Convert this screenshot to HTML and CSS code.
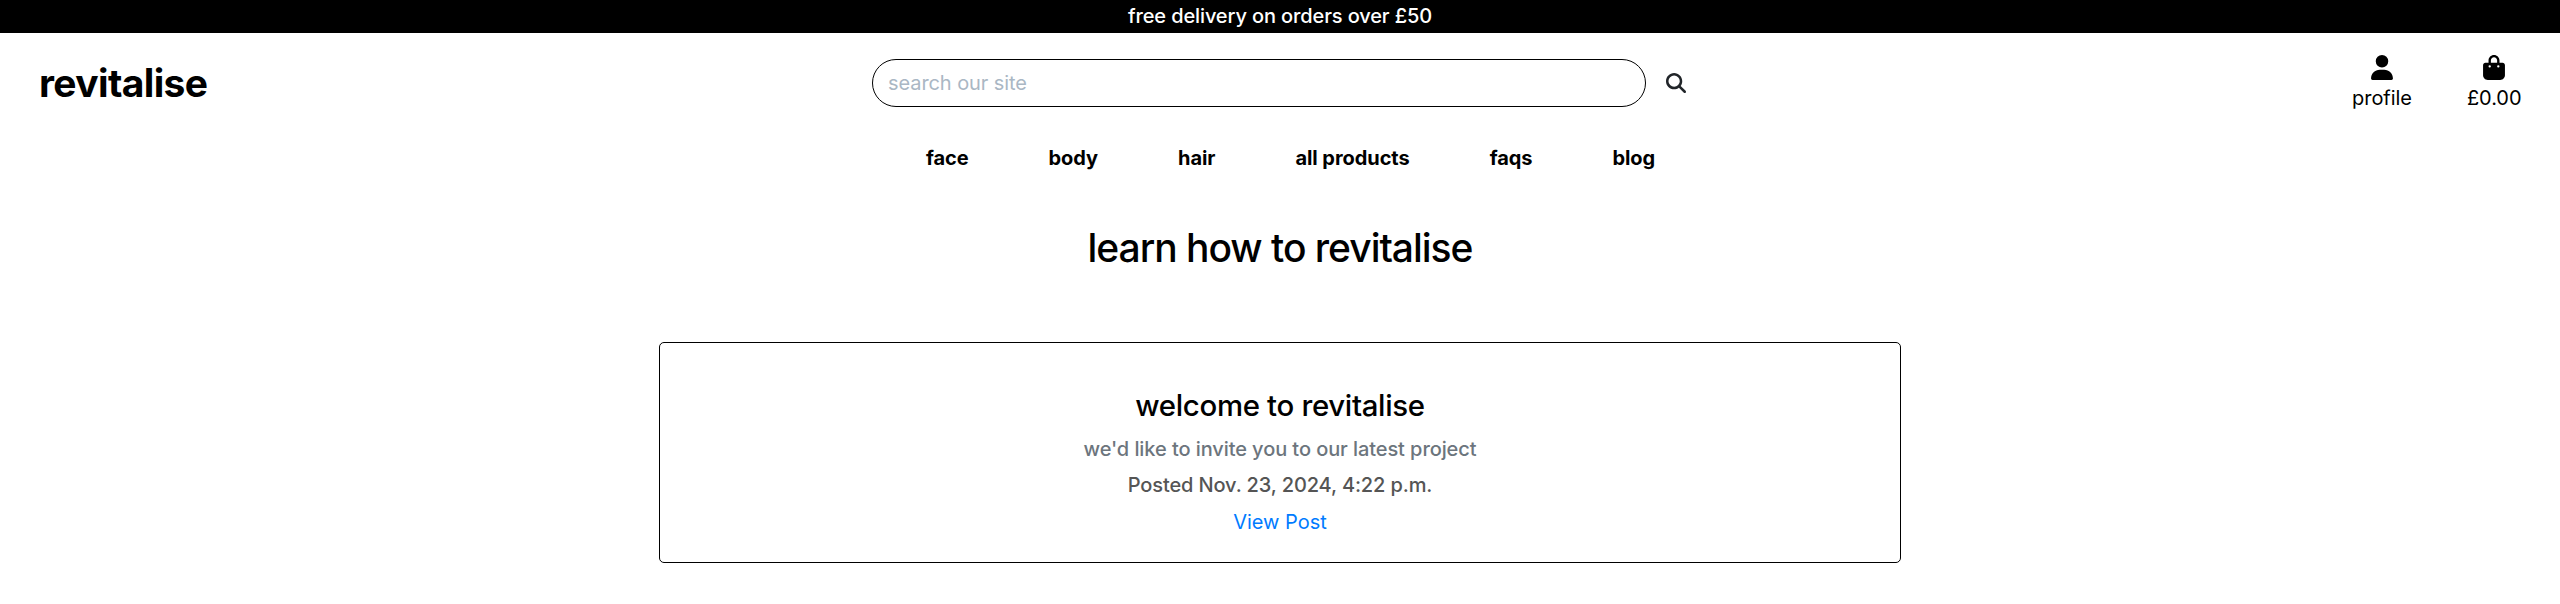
FILE: index.html
```html
<!DOCTYPE html>
<html lang="en">
<head>
<meta charset="utf-8">
<title>revitalise</title>
<link rel="stylesheet" href="styles.css">
</head>
<body>
<div class="banner">free delivery on orders over £50</div>
<header class="header">
  <a class="logo" href="#">revitalise</a>
  <form class="search">
    <input class="search-input" type="text" placeholder="search our site">
    <button class="search-button" type="button" aria-label="search">
      <svg class="search-icon" viewBox="0 0 512 512"><path d="M416 208c0 45.9-14.9 88.3-40 122.7L502.6 457.4c12.5 12.5 12.5 32.8 0 45.3s-32.8 12.5-45.3 0L330.7 376c-34.4 25.2-76.8 40-122.7 40C93.1 416 0 322.9 0 208S93.1 0 208 0S416 93.1 416 208zM208 352a144 144 0 1 0 0-288 144 144 0 1 0 0 288z"/></svg>
    </button>
  </form>
  <div class="account">
    <a class="account-link" href="#">
      <svg class="account-icon" viewBox="0 0 448 512"><path d="M224 256A128 128 0 1 0 224 0a128 128 0 1 0 0 256zm-45.7 48C79.8 304 0 383.8 0 482.3C0 498.7 13.3 512 29.7 512H418.3c16.4 0 29.7-13.3 29.7-29.7C448 383.8 368.2 304 269.7 304H178.3z"/></svg>
      <span>profile</span>
    </a>
    <a class="account-link" href="#">
      <svg class="account-icon" viewBox="0 0 448 512"><path d="M160 112c0-35.3 28.7-64 64-64s64 28.7 64 64v48H160V112zm-48 48H48c-26.5 0-48 21.5-48 48V416c0 53 43 96 96 96H352c53 0 96-43 96-96V208c0-26.5-21.5-48-48-48H336V112C336 50.1 285.9 0 224 0S112 50.1 112 112v48zm24 48a24 24 0 1 1 0 48 24 24 0 1 1 0-48zm152 24a24 24 0 1 1 48 0 24 24 0 1 1-48 0z"/></svg>
      <span>£0.00</span>
    </a>
  </div>
</header>
<nav class="nav">
  <a href="#">face</a>
  <a href="#">body</a>
  <a href="#">hair</a>
  <a href="#">all products</a>
  <a href="#">faqs</a>
  <a href="#">blog</a>
</nav>
<main class="main">
  <h1 class="title">learn how to revitalise</h1>
  <article class="card">
    <h2 class="card-title">welcome to revitalise</h2>
    <p class="card-subtitle">we'd like to invite you to our latest project</p>
    <p class="card-date">Posted Nov. 23, 2024, 4:22 p.m.</p>
    <a class="card-link" href="#">View Post</a>
  </article>
</main>
</body>
</html>
```
FILE: styles.css
```css
* { box-sizing: border-box; }
body {
  margin: 0;
  background: #fff;
  color: #000;
  font-family: Inter, sans-serif;
  font-size: 20px;
  line-height: 30px;
}
a { color: inherit; text-decoration: none; }
h1, h2, p { margin: 0; font-weight: 500; }
.banner {
  height: 33px;
  background: #000;
  color: #fff;
  font-weight: 500;
  letter-spacing: -0.12px;
  line-height: 32px;
  text-align: center;
}
.header {
  display: grid;
  grid-template-columns: 872px 832px 1fr;
  height: 100px;
}
.logo {
  padding: 20px 0 0 39px;
  font-size: 39px;
  font-weight: 700;
  letter-spacing: -0.63px;
  line-height: 60px;
}
.search { display: flex; height: 48px; margin-top: 26px; }
.search-input {
  width: 774px;
  height: 48px;
  padding: 0 15px;
  border: 1px solid #000;
  border-radius: 24px;
  background: #fff;
  font: inherit;
  letter-spacing: -0.08px;
}
.search-input::placeholder { color: #aab7c4; opacity: 1; }
.search-button {
  display: flex;
  align-items: center;
  margin: 0;
  padding: 0 0 1px 20px;
  border: 0;
  background: none;
}
.search-icon { width: 20px; height: 20px; fill: #212529; }
.account {
  display: flex;
  justify-content: flex-end;
  gap: 55px;
  padding: 22px 38.5px 0 0;
  letter-spacing: -0.05px;
}
.account-link { display: flex; flex-direction: column; align-items: center; }
.account-icon { width: 22px; height: 25px; margin-bottom: 3px; fill: #000; }
.nav {
  display: flex;
  justify-content: center;
  gap: 80px;
  height: 50px;
  padding: 10px 0 0 21px;
  font-weight: 700;
  letter-spacing: -0.06px;
}
.main { display: flex; flex-direction: column; align-items: center; }
.title { padding-top: 41px; font-size: 39px; letter-spacing: -1.03px; line-height: 48px; }
.card {
  display: flex;
  flex-direction: column;
  align-items: center;
  width: 1242px;
  height: 221px;
  margin-top: 70px;
  padding-top: 45px;
  border: 1px solid #000;
  border-radius: 5px;
}
.card-title { font-size: 29.4px; letter-spacing: -0.33px; line-height: 36px; }
.card-subtitle { margin-top: 10px; color: #6c757d; letter-spacing: -0.08px; }
.card-date { margin-top: 6px; color: #555; letter-spacing: -0.12px; }
.card-link { margin-top: 7px; color: #007bff; }
```
